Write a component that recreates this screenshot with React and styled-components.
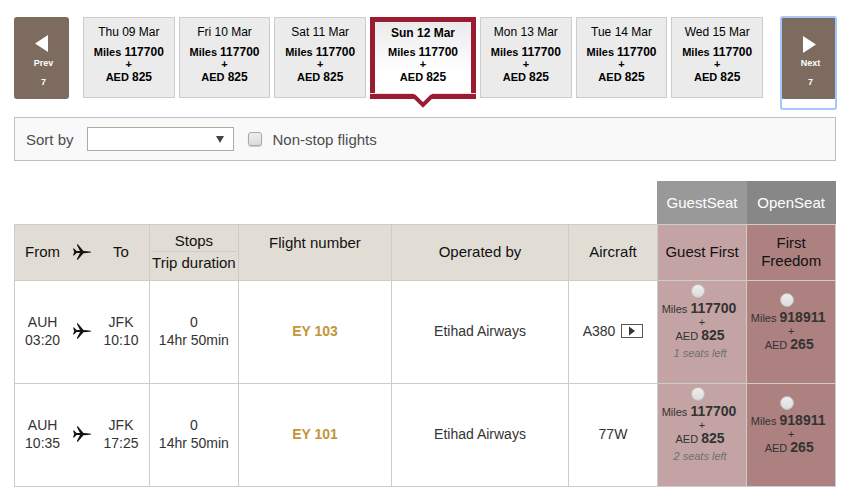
import React from "react";
import styled, { createGlobalStyle, css } from "styled-components";

const GlobalStyle = createGlobalStyle`
  *, *::before, *::after { box-sizing: border-box; }
  body {
    margin: 0;
    background: #fff;
    color: #333;
    font-family: "Liberation Sans", Arial, sans-serif;
    font-size: 14px;
  }
  button, select, input { font-family: inherit; margin: 0; }
`;

const Page = styled.main`
  padding: 17px 17px 9px 14px;
`;

const DateStrip = styled.nav`
  display: flex;
  align-items: flex-start;
  height: 82px;
`;

const PagerButton = styled.button`
  flex: none;
  width: 55px;
  height: 82px;
  padding: 17px 0 0 4px;
  border: 0;
  border-radius: 3px;
  background: #7c6b5e;
  color: #fff;
  font-size: 9px;
  font-weight: bold;
  line-height: 19px;
  display: flex;
  flex-direction: column;
  align-items: center;
  svg { display: block; }
`;

const PagerArrow = styled.svg`
  width: 14px;
  height: 20px;
  fill: #fff;
  margin-right: 4px;
`;

const FocusFrame = styled.div`
  height: 92px;
  flex: none;
  border-radius: 2px;
  outline: 2px solid #a5c7fe;
  outline-offset: -1px;
`;

const Days = styled.div`
  flex: 1;
  display: flex;
  gap: 4px;
  margin: 0 18px 0 14px;
`;

const DayCard = styled.button`
  position: relative;
  flex: 1 1 0;
  min-width: 0;
  height: 81px;
  padding: 5px 0 0;
  border: 1px solid #ccc;
  background: #ebebeb;
  color: #000;
  display: flex;
  flex-direction: column;
  align-items: center;
  justify-content: flex-start;
  ${(p) =>
    p.$selected &&
    css`
      flex: 0 0 106px;
      height: 82px;
      padding-top: 2px;
      border: 5px solid #9b1b30;
      background: linear-gradient(#ebebeb, #fff 70%);
      &::after {
        content: "";
        position: absolute;
        left: -5px;
        right: -5px;
        bottom: 0;
        height: 1px;
        background: #f3dfe2;
      }
    `}
`;

const DayName = styled.span`
  font-size: 12px;
  line-height: 18px;
  font-weight: ${(p) => (p.$selected ? "bold" : "normal")};
`;

const DayFare = styled.span`
  display: flex;
  flex-direction: column;
  align-items: center;
  padding-top: ${(p) => (p.$selected ? 2 : 3)}px;
  font-size: 11px;
  font-weight: bold;
  line-height: 16px;
  white-space: nowrap;
  b { font-size: 12px; }
`;

const Plus = styled.span`
  line-height: 9px;
`;

const Pointer = styled.svg`
  position: absolute;
  z-index: 1;
  left: 50%;
  top: 71px;
  width: 22px;
  height: 15px;
  transform: translateX(-50%);
`;

const SortBar = styled.form`
  display: flex;
  align-items: center;
  height: 44px;
  margin-top: 18px;
  padding-left: 11px;
  border: 1px solid #bfbfbf;
  background: #f9f9f9;
  color: #4d4d4d;
  font-size: 15px;
`;

const SelectBox = styled.div`
  position: relative;
  width: 147px;
  margin: 0 14px 0 13px;
  svg {
    position: absolute;
    right: 10px;
    top: 9px;
    width: 8px;
    height: 7px;
    pointer-events: none;
  }
`;

const SortSelect = styled.select`
  display: block;
  width: 100%;
  height: 24px;
  border: 1px solid #adad99;
  border-radius: 0;
  background: #fff;
  appearance: none;
`;

const Checkbox = styled.input`
  appearance: none;
  width: 14px;
  height: 14px;
  margin-right: 11px;
  border: 1px solid #a8a8a8;
  border-radius: 3px;
  background: linear-gradient(#eee, #dcdcdc);
  box-shadow: 0 1px 1px #ccc;
`;

const FlightTable = styled.table`
  width: 100%;
  margin-top: 20px;
  table-layout: fixed;
  border-collapse: collapse;
  text-align: center;
`;

const Col = styled.col`
  width: ${(p) => p.$w}%;
`;

const Blank = styled.td`
  padding: 0;
`;

const SeatHead = styled.th`
  height: 43px;
  padding: 0;
  background: ${(p) => p.$tone};
  color: #fff;
  font-size: 15px;
  font-weight: normal;
`;

const HeadCell = styled.th`
  height: 56px;
  padding: 0;
  border: 1px solid #ccc;
  background: ${(p) => p.$tone || "#e1ddd5"};
  color: #111;
  font-size: 15px;
  font-weight: normal;
  line-height: 18px;
`;

const RaisedLabel = styled.div`
  padding-bottom: 18px;
`;

const Stacked = styled.div`
  margin: 0 2px 2px;
  line-height: 21px;
  white-space: nowrap;
  div + div { border-top: 1px solid #ccc; }
`;

const Cell = styled.td`
  height: 103px;
  padding: 0 0 2px;
  border: 1px solid #ccc;
  background: ${(p) => p.$tone || "#fff"};
  line-height: 18px;
`;

const Route = styled.div`
  display: grid;
  grid-template-columns: 1fr 1fr 1fr;
  align-items: center;
  justify-items: center;
  padding: 0 8px;
`;

const PlaneSvg = styled.svg`
  display: block;
  width: 18px;
  height: 16px;
  fill: #1c1114;
`;

const FlightLink = styled.a`
  color: #c4943c;
  font-weight: bold;
  text-decoration: none;
`;

const Aircraft = styled.div`
  display: flex;
  align-items: center;
  justify-content: center;
  gap: 6px;
`;

const VideoButton = styled.button`
  display: block;
  padding: 0;
  border: 0;
  background: none;
  svg { display: block; width: 22px; height: 14px; }
`;

const Fare = styled.label`
  display: flex;
  flex-direction: column;
  align-items: center;
  padding-bottom: 15px;
  font-size: 11px;
  line-height: 17px;
  white-space: nowrap;
  b { font-size: 14px; }
`;

const Radio = styled.input`
  appearance: none;
  width: 14px;
  height: 14px;
  border: 1px solid #bcbcbc;
  border-radius: 50%;
  background: linear-gradient(#eee, #dcdcdc);
`;

const FareRadio = styled(Radio)`
  margin: 0 8px 2px 0;
`;

const MilesLine = styled.span`
  padding-right: 6px;
`;

const CashLine = styled.span`
  padding-right: 4px;
`;

const SeatsLeft = styled.em`
  padding-right: 4px;
  color: #707070;
`;

function Plane() {
  return (
    <PlaneSvg viewBox="0 0 18 16" aria-hidden="true">
      <path d="M0 4.500h1L3.600 7H7L4 1.200C3.700.2 4.500 0 5 .4L10.500 6.900l3.500.3 4 .6v.6l-4 .5-3.500.3L5 15.600c-.5.400-1.300.2-1-.8L7 9.100H3.600L1 11.500H0L1.200 8Z" />
    </PlaneSvg>
  );
}

function Pager({ label, next }) {
  return (
    <PagerButton type="button">
      <PagerArrow viewBox="0 0 14 20" aria-hidden="true">
        {next ? <path d="M1 2v17l13-8.500Z" /> : <path d="M13 1v17L0 9.500Z" />}
      </PagerArrow>
      <span>{label}</span>
      <span>7</span>
    </PagerButton>
  );
}

function Day({ name, selected }) {
  return (
    <DayCard type="button" $selected={selected}>
      <DayName $selected={selected}>{name}</DayName>
      <DayFare $selected={selected}>
        <span>Miles <b>117700</b></span>
        <Plus>+</Plus>
        <span>AED <b>825</b></span>
      </DayFare>
      {selected && (
        <Pointer viewBox="0 0 22 15" aria-hidden="true">
          <path d="M2 0h18v2L11 11 2 2Z" fill="#fff" />
          <path d="M1 3.500h1.500L11 12l8.500-8.500H21" fill="none" stroke="#9b1b30" strokeWidth="4" />
        </Pointer>
      )}
    </DayCard>
  );
}

function FareOption({ name, miles, aed, seats }) {
  return (
    <Fare>
      <FareRadio type="radio" name={name} />
      <MilesLine>Miles <b>{miles}</b></MilesLine>
      <Plus>+</Plus>
      <CashLine>AED <b>{aed}</b></CashLine>
      {seats && <SeatsLeft>{seats} seats left</SeatsLeft>}
    </Fare>
  );
}

const days = ["Thu 09 Mar", "Fri 10 Mar", "Sat 11 Mar", "Sun 12 Mar", "Mon 13 Mar", "Tue 14 Mar", "Wed 15 Mar"];
const flights = [
  { depart: "03:20", arrive: "10:10", number: "EY 103", aircraft: "A380", video: true, seats: 1 },
  { depart: "10:35", arrive: "17:25", number: "EY 101", aircraft: "77W", video: false, seats: 2 },
];
const columns = [16.4, 10.9, 18.6, 21.6, 10.8, 10.9, 10.8];

export default function App() {
  return (
    <>
      <GlobalStyle />
      <Page>
        <DateStrip aria-label="Travel dates">
          <Pager label="Prev" />
          <Days>
            {days.map((d) => (
              <Day key={d} name={d} selected={d === "Sun 12 Mar"} />
            ))}
          </Days>
          <FocusFrame>
            <Pager label="Next" next />
          </FocusFrame>
        </DateStrip>

        <SortBar>
          <label htmlFor="sort">Sort by</label>
          <SelectBox>
            <SortSelect id="sort" defaultValue="">
              <option value="" />
            </SortSelect>
            <svg viewBox="0 0 8 7" aria-hidden="true">
              <path d="M0 0h8L4 7Z" fill="#444" />
            </svg>
          </SelectBox>
          <Checkbox type="checkbox" id="nonstop" />
          <label htmlFor="nonstop">Non-stop flights</label>
        </SortBar>

        <FlightTable>
          <colgroup>
            {columns.map((w, i) => (
              <Col key={i} $w={w} />
            ))}
          </colgroup>
          <thead>
            <tr>
              <Blank colSpan={5} />
              <SeatHead $tone="#999">GuestSeat</SeatHead>
              <SeatHead $tone="#878787">OpenSeat</SeatHead>
            </tr>
            <tr>
              <HeadCell>
                <Route>
                  <span>From</span>
                  <Plane />
                  <span>To</span>
                </Route>
              </HeadCell>
              <HeadCell>
                <Stacked>
                  <div>Stops</div>
                  <div>Trip duration</div>
                </Stacked>
              </HeadCell>
              <HeadCell>
                <RaisedLabel>Flight number</RaisedLabel>
              </HeadCell>
              <HeadCell>Operated by</HeadCell>
              <HeadCell>Aircraft</HeadCell>
              <HeadCell $tone="#c3a3a3">Guest First</HeadCell>
              <HeadCell $tone="#ae8181">First Freedom</HeadCell>
            </tr>
          </thead>
          <tbody>
            {flights.map((f) => (
              <tr key={f.number}>
                <Cell>
                  <Route>
                    <span>AUH<br />{f.depart}</span>
                    <Plane />
                    <span>JFK<br />{f.arrive}</span>
                  </Route>
                </Cell>
                <Cell>0<br />14hr 50min</Cell>
                <Cell><FlightLink href="#flight">{f.number}</FlightLink></Cell>
                <Cell>Etihad Airways</Cell>
                <Cell>
                  <Aircraft>
                    {f.aircraft}
                    {f.video && (
                      <VideoButton type="button" aria-label="Watch aircraft video">
                        <svg viewBox="0 0 22 14" aria-hidden="true">
                          <rect x=".5" y=".5" width="21" height="13" fill="#fff" stroke="#555" />
                          <path d="M8 2.500v9l6-4.500Z" fill="#333" />
                        </svg>
                      </VideoButton>
                    )}
                  </Aircraft>
                </Cell>
                <Cell $tone="#c3a3a3">
                  <FareOption name="fare" miles="117700" aed="825" seats={f.seats} />
                </Cell>
                <Cell $tone="#ae8181">
                  <FareOption name="fare" miles="918911" aed="265" />
                </Cell>
              </tr>
            ))}
          </tbody>
        </FlightTable>
      </Page>
    </>
  );
}
